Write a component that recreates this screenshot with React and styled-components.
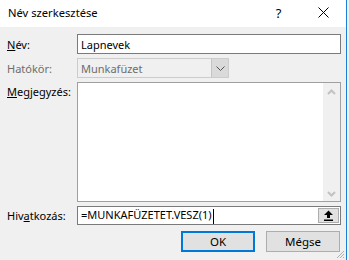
import React from 'react';
import styled, { createGlobalStyle } from 'styled-components';

const GlobalStyle = createGlobalStyle`
    html, body {
        margin: 0;
        padding: 0;
        background: #f0f0f0;
    }
    body {
        font-family: "Segoe UI", "Noto Sans", "Liberation Sans", sans-serif;
        font-size: 11px;
        color: #000;
    }
`;

const Window = styled.div`
    position: relative;
    width: 346px;
    height: 260px;
    background: #f0f0f0;
    border-right: 1px solid #1b7fd4;
    overflow: hidden;
`;

const TitleBar = styled.div`
    display: flex;
    align-items: center;
    height: 27px;
    background: #ffffff;
    padding-left: 8px;
`;

const Title = styled.div`
    flex: 1;
    font-size: 11.2px;
    padding-bottom: 2px;
`;

const TitleButton = styled.div`
    width: 45px;
    height: 27px;
    display: flex;
    align-items: center;
    justify-content: center;
    font-size: 13px;
    padding-bottom: 2px;
`;

const Body = styled.div`
    display: grid;
    grid-template-columns: 63px 264px;
    column-gap: 7px;
    row-gap: 4px;
    padding: 7px 0 0 7px;
`;

const Label = styled.div`
    height: ${p => p.h}px;
    display: flex;
    align-items: ${p => p.top ? 'flex-start' : 'center'};
    padding-top: ${p => p.top ? '2px' : '0'};
    color: ${p => p.disabled ? '#6d6d6d' : '#000'};
    white-space: nowrap;
    box-sizing: border-box;
`;

const Key = styled.span`
    text-decoration: underline;
`;

const TextBox = styled.div`
    height: ${p => p.h}px;
    box-sizing: border-box;
    border: 1px solid ${p => p.disabled ? '#cccccc' : '#7a7a7a'};
    background: ${p => p.disabled ? '#f0f0f0' : '#ffffff'};
    color: ${p => p.disabled ? '#6d6d6d' : '#000'};
    display: flex;
    align-items: center;
    padding-left: 3px;
    width: ${p => p.w ? p.w + 'px' : 'auto'};
`;

const Select = styled(TextBox)`
    padding-right: 0;
    justify-content: space-between;
`;

const DropButton = styled.div`
    width: 16px;
    height: 18px;
    background: #dadada;
    border-left: 1px solid #c4c4c4;
    display: flex;
    align-items: center;
    justify-content: center;
`;

const Memo = styled.div`
    height: 120px;
    box-sizing: border-box;
    border: 1px solid #a0a0a0;
    background: #ffffff;
    display: flex;
    justify-content: flex-end;
`;

const ScrollBar = styled.div`
    width: 17px;
    background: #f0f0f0;
    display: flex;
    flex-direction: column;
    justify-content: space-between;
    align-items: center;
    padding: 6px 0 4px;
    box-sizing: border-box;
`;

const RefBox = styled(TextBox)`
    padding-right: 1px;
    justify-content: space-between;
`;

const Caret = styled.span`
    display: inline-block;
    width: 1px;
    height: 15px;
    background: #000;
    margin-left: 1px;
    vertical-align: middle;
`;

const CollapseButton = styled.div`
    width: 21px;
    height: 15px;
    box-sizing: border-box;
    border: 1px solid #adadad;
    background: #e1e1e1;
    display: flex;
    align-items: center;
    justify-content: center;
`;

const ButtonRow = styled.div`
    grid-column: 2;
    display: flex;
    justify-content: flex-end;
    gap: 11px;
    margin-top: 2px;
    padding-right: 1px;
`;

const Button = styled.div`
    width: 74px;
    height: 21px;
    box-sizing: border-box;
    border: ${p => p.primary ? '2px solid #0078d7' : '1px solid #adadad'};
    background: #e1e1e1;
    display: flex;
    align-items: center;
    justify-content: center;
    font-size: 11.5px;
`;

const Grip = styled.svg`
    position: absolute;
    right: 1px;
    bottom: 1px;
`;

const Chevron = ({ up }) => (
    <svg width="9" height="6" viewBox="0 0 9 6">
        <path
            d={up ? 'M1 5 L4.5 1.5 L8 5' : 'M1 1 L4.5 4.5 L8 1'}
            fill="none"
            stroke="#c2c2c2"
            strokeWidth="2"
        />
    </svg>
);

const App = () => {
    return (
        <>
            <GlobalStyle />
            <Window>
                <TitleBar>
                    <Title>Név szerkesztése</Title>
                    <TitleButton>?</TitleButton>
                    <TitleButton>
                        <svg width="11" height="11" viewBox="0 0 11 11">
                            <path d="M0.5 0.5 L10.5 10.5 M10.5 0.5 L0.5 10.5" stroke="#000" strokeWidth="1" />
                        </svg>
                    </TitleButton>
                </TitleBar>
                <Body>
                    <Label h={20}><span><Key>N</Key>év:</span></Label>
                    <TextBox h={20}>Lapnevek</TextBox>

                    <Label h={20} disabled>Hatókör:</Label>
                    <Select h={20} w={152} disabled>
                        <span>Munkafüzet</span>
                        <DropButton>
                            <svg width="9" height="5" viewBox="0 0 9 5">
                                <path d="M0.5 0.5 L4.5 4.5 L8.5 0.5" fill="none" stroke="#555" strokeWidth="1" />
                            </svg>
                        </DropButton>
                    </Select>

                    <Label h={120} top><span><Key>M</Key>egjegyzés:</span></Label>
                    <Memo>
                        <ScrollBar>
                            <Chevron up />
                            <Chevron />
                        </ScrollBar>
                    </Memo>

                    <Label h={19}><span>Hiv<Key>a</Key>tkozás:</span></Label>
                    <RefBox h={19}>
                        <span>=MUNKAFÜZETET.VESZ(1)<Caret /></span>
                        <CollapseButton>
                            <svg width="11" height="11" viewBox="0 0 11 11">
                                <path d="M5.5 0.5 L10 5 L7 5 L7 8 L4 8 L4 5 L1 5 Z" fill="#000" />
                                <rect x="1" y="9.5" width="9" height="1.5" fill="#000" />
                            </svg>
                        </CollapseButton>
                    </RefBox>

                    <ButtonRow>
                        <Button primary>OK</Button>
                        <Button>Mégse</Button>
                    </ButtonRow>
                </Body>
                <Grip width="10" height="10" viewBox="0 0 10 10">
                    <path d="M9 2 L2 9 M9 5 L5 9 M9 8 L8 9" stroke="#b0b0b0" strokeWidth="1" />
                </Grip>
            </Window>
        </>
    );
};

export default App;
